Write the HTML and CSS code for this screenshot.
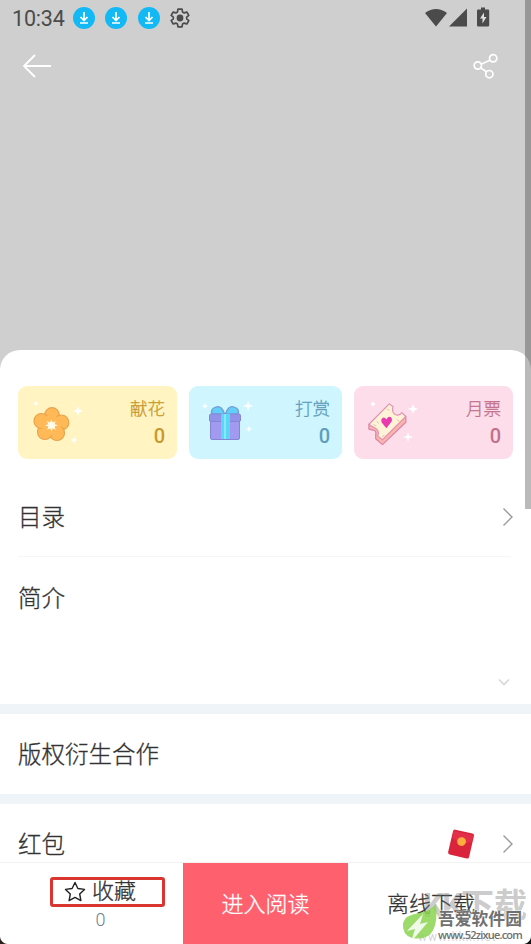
FILE: index.html
```html
<!DOCTYPE html>
<html lang="zh-CN">
<head>
<meta charset="utf-8">
<title>作品详情</title>
<link rel="stylesheet" href="styles.css">
</head>
<body>
<div class="screen">
  <header class="hero">
    <div class="status">
      <span class="clock">10:34</span>
      <svg class="dl" viewBox="0 0 22 22"><circle cx="11" cy="11" r="11" fill="#13b9f5"/><path d="M11 5v8M7.500 10l3.500 3.500L14.500 10M7 16h8" fill="none" stroke="#fff" stroke-width="1.700"/></svg>
      <svg class="dl" viewBox="0 0 22 22"><circle cx="11" cy="11" r="11" fill="#13b9f5"/><path d="M11 5v8M7.500 10l3.500 3.500L14.500 10M7 16h8" fill="none" stroke="#fff" stroke-width="1.700"/></svg>
      <svg class="dl" viewBox="0 0 22 22"><circle cx="11" cy="11" r="11" fill="#13b9f5"/><path d="M11 5v8M7.500 10l3.500 3.500L14.500 10M7 16h8" fill="none" stroke="#fff" stroke-width="1.700"/></svg>
      <svg class="gear" viewBox="0 0 20 20" fill="none" stroke="#4b4b4b"><path d="M8 1.200h4l.5 2.700 1.700 1 2.600-.9 2 3.400-2.100 1.700v1.800l2.100 1.700-2 3.400-2.600-.9-1.700 1-.5 2.700H8l-.5-2.700-1.700-1-2.600.9-2-3.400 2.100-1.700V9.100L1.200 7.400l2-3.400 2.600.9 1.700-1z" stroke-width="1.700" stroke-linejoin="round"/><circle cx="10" cy="10" r="3.400" fill="#4b4b4b" stroke="none"/></svg>
      <svg class="signals" viewBox="0 0 66 20" fill="#4b4b4b"><path d="M0 5Q11-3 22 5L11 18.500z"/><path d="M42 .5V18.500H24z"/><path d="M56-.5h4v2h3q1.200 0 1.200 1.200v14.600q0 1.200-1.200 1.200h-9.800q-1.200 0-1.200-1.200V2.700q0-1.200 1.200-1.200H56z"/><path d="M59 4.500l-4 6h2.500v5l4-6.500H59z" fill="#dedede"/></svg>
    </div>
    <nav class="nav">
      <svg class="back" viewBox="0 0 30 24"><path d="M13 1L2 12l11 11M2 12h27" fill="none" stroke="#fff" stroke-width="1.800"/></svg>
      <svg class="share" viewBox="0 0 26 26" fill="none" stroke="#fff" stroke-width="1.800"><path d="M8.500 11.700L17.500 7.500M8 15.500l6 4"/><circle cx="5" cy="13" r="3.800"/><circle cx="21" cy="5.500" r="3.800"/><circle cx="17" cy="22" r="3.800"/></svg>
    </nav>
  </header>

  <main class="sheet">
    <section class="cards">
      <div class="card flower">
        <svg class="art" viewBox="0 0 56 48">
          <g fill="#ffb957" stroke="#e9a34c" stroke-width="1.200"><circle cx="24" cy="14" r="7.300"/><circle cx="33.300" cy="21.500" r="7.500"/><circle cx="29" cy="32" r="7.500"/><circle cx="17" cy="31" r="7.500"/><circle cx="13.500" cy="20" r="7.500"/></g>
          <circle cx="23.500" cy="24" r="10" fill="#ffb957"/>
          <path d="M23.500 18.500l1.200 3.200 3-1.700-1.200 3.200 3.500 1-3.500 1.300 1.200 3.200-3-1.500-1.200 3.300-1.200-3.200-3.200 1.500 1.200-3.300-3.300-1.200 3.300-1.100-1.500-3.200 3.200 1.500z" fill="#fffce9"/>
          <g fill="#fff"><path d="M50 5l1.400 3.600L55 10l-3.600 1.400L50 15l-1.400-3.600L45 10l3.600-1.400z"/><path d="M46 35l1 3 3 1-3 1-1 3-1-3-3-1 3-1z"/><circle cx="8" cy="2.500" r="1.800"/></g>
        </svg>
        <div class="stat"><span>献花</span><b>0</b></div>
      </div>
      <div class="card gift">
        <svg class="art" viewBox="0 0 56 48">
          <g fill="#62cff8" stroke="#719bd2" stroke-width="1.300"><path d="M24 14Q21 4 15 6t-4 7z"/><path d="M24 14Q27 4 33 6t4 7z"/></g>
          <rect x="9.500" y="18" width="29" height="20.500" rx="1.500" fill="#a29af0" stroke="#8585d5"/>
          <rect x="8.500" y="13" width="31" height="7.500" rx="1.500" fill="#9292e8" stroke="#8585d5"/>
          <path d="M20 13h9v25h-9z" fill="#59d7f5"/><path d="M23 13h2v25h-2z" fill="#88e7fb"/>
          <g fill="#fff"><path d="M47 0l1.300 3.700L52 5l-3.700 1.300L47 10l-1.300-3.700L42 5l3.700-1.300z"/><path d="M4 2l1 2 2 1-2 1-1 2-1-2-2-1 2-1z"/><path d="M48 25l1 2 2 1-2 1-1 2-1-2-2-1 2-1z"/></g>
        </svg>
        <div class="stat"><span>打赏</span><b>0</b></div>
      </div>
      <div class="card ticket">
        <svg class="art" viewBox="0 0 56 48">
          <g transform="translate(2 -1) scale(.97)">
          <path d="M3 25v5l4 1q4 0 3 5v4l7 6L41 23v-6z" fill="#f8b7a9" stroke="#dc84ae" stroke-width="1.300" stroke-linejoin="round"/>
          <path d="M3 25L24 4l4 3q-2 5 2 8 4 2 7-2l4 4-24 24-5-4q2-4-1-7-4-2-8-5z" fill="#fff3d7" stroke="#e291b5" stroke-width="1.200" stroke-linejoin="round"/>
          <path d="M21 29l-5-6q-1-4 2-5 2 0 3 2 2-4 5-2 2 3-1 6z" fill="#e939ae"/>
          <path d="M11 22l2 2m-5 1l2 2m12-18l2 2m8 9l2 2m-17 16l2-2" stroke="#eca8a3"/></g>
          <g fill="#fff"><path d="M49 3l1.400 3.600L54 8l-3.600 1.400L49 13l-1.400-3.600L44 8l3.600-1.400z"/><path d="M44 31l1.200 3.800L49 36l-3.800 1.200L44 41l-1.200-3.800L39 36l3.800-1.200z"/><path d="M9 0l1 2 2 1-2 1-1 2-1-2-2-1 2-1z"/></g>
        </svg>
        <div class="stat"><span>月票</span><b>0</b></div>
      </div>
    </section>

    <section class="row catalog"><h2>目录</h2><svg class="chev" viewBox="0 0 12 20"><path d="M1.500 1.500L10 10l-8.500 8.500" fill="none" stroke="#9b9b9b" stroke-width="1.400"/></svg></section>
    <section class="intro"><h2>简介</h2><svg class="more" viewBox="0 0 12 8"><path d="M1 1.500l5 5 5-5" fill="none" stroke="#d8d8d8" stroke-width="1.700"/></svg></section>
    <section class="row rights"><h2>版权衍生合作</h2></section>
    <section class="row packet"><h2>红包</h2>
      <svg class="envelope" viewBox="0 0 28 30"><g transform="rotate(13 14 15)"><rect x="3.300" y="2.300" width="21.500" height="25.500" rx="2" fill="#d9243c"/><path d="M4 4h20v6Q14 18 4 10z" fill="#e3304a"/><circle cx="14" cy="12.500" r="4.400" fill="#fbad40"/></g></svg>
      <svg class="chev" viewBox="0 0 12 20"><path d="M1.500 1.500L10 10l-8.500 8.500" fill="none" stroke="#9b9b9b" stroke-width="1.400"/></svg>
    </section>
  </main>

  <footer class="bar">
    <div class="fav">
      <div class="favbox"><svg viewBox="0 0 22 22"><path d="M11 1.500l2.900 6 6.600.9-4.800 4.600 1.200 6.600-5.900-3.200-5.900 3.200L6.300 13 1.500 8.400l6.600-.9z" fill="none" stroke="#222" stroke-width="1.400" stroke-linejoin="round"/></svg><span>收藏</span></div>
      <span class="count">0</span>
    </div>
    <div class="read">进入阅读</div>
    <div class="offline">离线下载</div>
  </footer>

  <div class="ghost"><span>KK</span>下载</div>
  <div class="ghosturl">www.kkx.net</div>
  <svg class="leaf" viewBox="0 0 38 38"><path d="M34 0Q38 39 10 34 0 31 1 19 3 11 17 9 28 7 34 0z" fill="#8bd450" fill-opacity=".85"/><path d="M21 10L5 27l8-2-4 13 17-20-8 2z" fill="#fff" fill-opacity=".85"/></svg>
  <div class="mark"><b>吾爱软件园</b><span>www.52zixue.com</span></div>
  <i class="scroll"></i>
  <i class="corner left"></i><i class="corner right"></i>
</div>
</body>
</html>
```

FILE: styles.css
```css
* { box-sizing: border-box; }
body { margin: 0; background: #cfcfcf; font-family: Roboto, "Noto Sans CJK SC", sans-serif; }
svg { display: block; flex: none; overflow: visible; }
.screen { position: relative; display: flex; flex-direction: column; width: 531px; height: 944px; overflow: hidden; background: #cfcfcf; }
.hero { height: 350px; flex: none; }
.status { display: flex; align-items: center; height: 36px; padding: 0 40px 0 12px; }
.clock { width: 60.500px; font-size: 21.500px; color: #4b4b4b; letter-spacing: -.2px; white-space: nowrap; }
.dl { width: 22px; height: 22px; margin-right: 10.500px; }
.gear { width: 20px; height: 20px; }
.signals { width: 66px; height: 20px; margin-left: auto; }
.nav { display: flex; align-items: center; justify-content: space-between; height: 59px; padding: 0 33px 0 22px; }
.back { width: 30px; height: 24px; }
.share { width: 25px; height: 25px; }

.sheet { flex: none; height: 513px; overflow: hidden; background: #fff; border-radius: 20px 20px 0 0; }
.cards { display: grid; grid-template-columns: 159px 153px 159px; gap: 12px; padding: 36px 18px 0; }
.card { display: flex; justify-content: space-between; height: 73px; padding: 11px 12px 0; border-radius: 9px; }
.art { width: 56px; height: 48px; margin-top: 4px; margin-left: -2px; }
.gift .art { margin-left: 0; }
.stat { display: flex; flex-direction: column; align-items: flex-end; font-size: 17.500px; line-height: 25px; font-weight: 300; }
.stat span, h2, .favbox span, .read, .offline { -webkit-text-stroke: .3px currentColor; }
.stat b { font-size: 20px; font-weight: 500; line-height: 29px; }
.flower { background: #fff4c2; color: #c9992f; }
.gift { background: #cff5ff; color: #5e9dbd; }
.ticket { background: #fddde9; color: #c2708c; }

h2 { margin: 0; font-size: 23.500px; line-height: 34px; font-weight: 300; color: #333; }
.row { display: flex; align-items: center; justify-content: space-between; padding: 0 17px 0 18px; }
.row h2 { padding-top: 2px; }
.chev { width: 12px; height: 20px; }
.catalog { height: 79px; margin-top: 18px; }
.intro { position: relative; height: 148px; padding-top: 25px; margin: 0 20px 0 18px; border-top: 1px solid #f6f6f6; }
.more { position: absolute; right: 1px; bottom: 18px; width: 12px; height: 8px; }
.rights { height: 90px; border-top: 10px solid #eff4f8; }
.packet { height: 90px; border-top: 10px solid #eff4f8; }
.envelope { width: 28px; height: 30px; margin-left: auto; margin-right: 27px; }

.bar { display: grid; grid-template-columns: 183px 165px 183px; height: 81px; background: #fff; box-shadow: 0 -1px #f1f1f1; font-size: 22px; font-weight: 300; color: #333; z-index: 1; }
.fav { display: flex; flex-direction: column; align-items: center; padding: 14px 0 0 32px; }
.favbox { display: flex; align-items: center; gap: 6px; width: 115px; height: 30px; padding-left: 11px; border: 3px solid #d9362f; border-radius: 3px; line-height: 26px; }
.favbox svg { width: 22px; height: 22px; }
.count { margin: 2px 14px 0 0; font-size: 18px; line-height: 21px; color: #708090; }
.read, .offline { display: flex; align-items: center; justify-content: center; padding-bottom: 3px; }
.read { background: #ff606e; color: #fff; }
.offline { padding-right: 17px; }

.ghost, .ghosturl, .leaf, .mark, .scroll, .corner { position: absolute; z-index: 2; }
.ghost { left: 423px; top: 887px; font-size: 33px; line-height: 38px; font-weight: 700; color: rgba(120,120,120,.4); white-space: nowrap; }
.ghost span { letter-spacing: -2px; }
.ghosturl { left: 418px; top: 930px; font-size: 12px; line-height: 14px; letter-spacing: 1px; color: rgba(120,120,120,.35); }
.leaf { left: 402px; top: 904px; width: 38px; height: 38px; }
.mark { left: 438px; top: 909px; display: flex; flex-direction: column; color: #707070; text-shadow: 0 0 2px #fff, 0 0 2px #fff; white-space: nowrap; }
.mark b { font-size: 16.800px; line-height: 20px; }
.mark span { font-family: "Open Sans", sans-serif; font-size: 11px; line-height: 12px; font-weight: 600; letter-spacing: -.8px; }
.scroll { right: 0; top: 0; width: 6px; height: 509px; background: rgba(0,0,0,.27); }
.corner { bottom: 0; width: 8px; height: 8px; }
.left { left: 0; background: radial-gradient(circle at 100% 0, transparent 7.500px, #2b211c 8.500px); }
.right { right: 0; background: radial-gradient(circle at 0 0, transparent 7.500px, #111 8.500px); }
```
